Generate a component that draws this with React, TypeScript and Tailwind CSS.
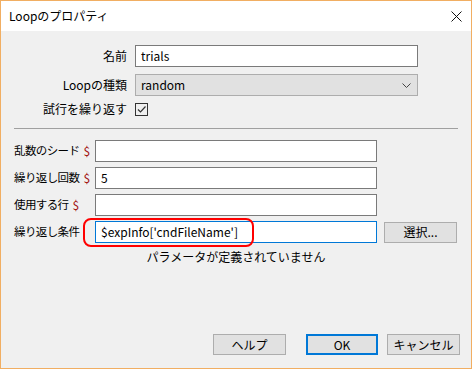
import React from 'react';

const font = { fontFamily: '"Noto Sans CJK JP", "Noto Sans", sans-serif' };

const Dollar = () => <span className="text-[#a31515] ml-[4px] text-[12px] tracking-normal">$</span>;

const TextBox = ({ value = '', focused = false }: { value?: string; focused?: boolean }) => (
  <div
    className={`h-[22px] w-[282px] bg-white border flex items-center pl-[5px] text-[12px] text-black ${
      focused ? 'border-[#0078d7]' : 'border-[#7a7a7a]'
    }`}
  >
    {value}
  </div>
);

const Btn = ({ label, primary = false, w = 'w-[73px]' }: { label: string; primary?: boolean; w?: string }) => (
  <div
    className={`h-[21px] ${w} bg-[#e1e1e1] flex items-center justify-center text-[12px] text-black ${
      primary ? 'border-2 border-[#0078d7]' : 'border border-[#adadad]'
    }`}
  >
    {label}
  </div>
);

const Label = ({ children, top = false }: { children: React.ReactNode; top?: boolean }) => (
  <div
    className={`w-[81px] whitespace-nowrap tracking-[-0.6px] text-[11.5px] text-black flex items-center ${
      top ? 'self-start pt-[2px]' : ''
    }`}
  >
    {children}
  </div>
);

export default function App() {
  return (
    <div className="w-[472px] h-[369px] border border-[#f1ae62] flex flex-col bg-[#f0f0f0] overflow-hidden" style={font}>
      {/* title bar */}
      <div className="h-[30px] bg-white flex items-center justify-between pl-[8px] pr-[9px]">
        <span className="text-[12px] text-black">Loopのプロパティ</span>
        <svg width="11" height="11" viewBox="0 0 11 11">
          <path d="M0.5 0.5 L10.5 10.5 M10.5 0.5 L0.5 10.5" stroke="#111" strokeWidth="1" />
        </svg>
      </div>

      {/* top fields */}
      <div className="flex flex-col pt-[14px]">
        <div className="flex items-center h-[22px] gap-[8px]">
          <div className="w-[126px] text-right text-[12px] text-black">名前</div>
          <div className="h-[22px] w-[283px] bg-white border border-[#7a7a7a] flex items-center pl-[5px] text-[12px] text-black">
            trials
          </div>
        </div>
        <div className="flex items-center h-[22px] gap-[8px] mt-[7px]">
          <div className="w-[126px] text-right text-[12px] text-black">Loopの種類</div>
          <div className="h-[22px] w-[283px] bg-[#e1e1e1] border border-[#adadad] flex items-center justify-between pl-[5px] pr-[6px] text-[12px] text-black">
            <span>random</span>
            <svg width="9" height="5" viewBox="0 0 9 5">
              <path d="M0.5 0.5 L4.5 4.5 L8.5 0.5" stroke="#444" strokeWidth="1" fill="none" />
            </svg>
          </div>
        </div>
        <div className="flex items-center h-[22px] gap-[8px] mt-[2px]">
          <div className="w-[126px] text-right text-[12px] text-black">試行を繰り返す</div>
          <div className="w-[13px] h-[13px] border border-[#333] bg-transparent flex items-center justify-center">
            <svg width="11" height="11" viewBox="0 0 11 11">
              <path d="M2 5.5 L4.5 8 L9.5 2.5" stroke="#333" strokeWidth="1.2" fill="none" />
            </svg>
          </div>
        </div>
        <div className="h-px bg-[#a0a0a0] mt-[8px] ml-[13px] mr-[13px]" />
      </div>

      {/* loop parameters */}
      <div className="flex flex-col pl-[13px] mt-[11px] gap-[5px]">
        <div className="flex items-center h-[22px]">
          <Label>
            乱数のシード<Dollar />
          </Label>
          <TextBox />
        </div>
        <div className="flex items-center h-[22px]">
          <Label>
            繰り返し回数<Dollar />
          </Label>
          <TextBox value="5" />
        </div>
        <div className="flex items-center h-[22px]">
          <Label>
            使用する行<Dollar />
          </Label>
          <TextBox />
        </div>
        <div className="flex items-center h-[22px]">
          <Label top>繰り返し条件</Label>
          <div className="relative">
            <TextBox value="$expInfo['cndFileName']" focused />
            <div className="absolute left-[-12px] top-[-3px] w-[171px] h-[29px] border-2 border-[#ff0000] rounded-[8px] pointer-events-none" />
          </div>
          <div className="ml-[7px]">
            <Btn label="選択..." />
          </div>
        </div>
      </div>

      <div className="text-center text-[12px] text-black mt-[5px]">パラメータが定義されていません</div>

      <div className="flex-1" />

      {/* dialog buttons */}
      <div className="flex justify-end items-center pr-[11px] mb-[13px]">
        <Btn label="ヘルプ" />
        <div className="ml-[20px]">
          <Btn label="OK" primary w="w-[72px]" />
        </div>
        <div className="ml-[9px]">
          <Btn label="キャンセル" />
        </div>
      </div>
    </div>
  );
}
